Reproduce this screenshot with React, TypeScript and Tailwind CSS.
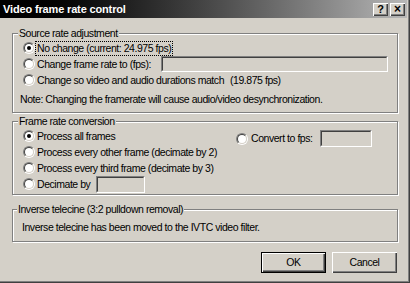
import React from 'react';

const Radio: React.FC<{ checked?: boolean }> = ({ checked }) => (
  <span className="w-[12px] h-[12px] shrink-0 rounded-full border border-t-[#808080] border-l-[#808080] border-b-white border-r-white">
    <span className="w-full h-full rounded-full border border-t-[#404040] border-l-[#404040] border-b-[#d4d0c8] border-r-[#d4d0c8] bg-white flex items-center justify-center">
      {checked && <span className="w-[4px] h-[4px] rounded-full bg-black"></span>}
    </span>
  </span>
);

const TextBox: React.FC<{ className?: string }> = ({ className }) => (
  <span className={`block border border-t-[#808080] border-l-[#808080] border-b-white border-r-white ${className ?? ''}`}>
    <span className="block w-full h-full border border-t-[#404040] border-l-[#404040] border-b-[#d4d0c8] border-r-[#d4d0c8] bg-[#d4d0c8]"></span>
  </span>
);

const Option: React.FC<{ checked?: boolean; focused?: boolean; children: React.ReactNode }> = ({ checked, focused, children }) => (
  <div className="h-[16px] flex items-center">
    <Radio checked={checked} />
    <span className={`ml-[1px] px-[1px] leading-[13px] whitespace-nowrap ${focused ? 'outline outline-1 outline-dotted outline-black' : ''}`}>
      {children}
    </span>
  </div>
);

const GroupBox: React.FC<{ title: string; className?: string; children: React.ReactNode }> = ({ title, className, children }) => (
  <fieldset className={`border border-[#808080] shadow-[inset_1px_1px_0_#fff,1px_1px_0_#fff] ${className ?? ''}`}>
    <legend className="-ml-[5px] px-[1px] leading-[13px] bg-[#d4d0c8]">{title}</legend>
    {children}
  </fieldset>
);

const Button: React.FC<{ isDefault?: boolean; children: React.ReactNode }> = ({ isDefault, children }) => (
  <button className={`w-[65px] h-[21px] bg-[#d4d0c8] ${isDefault ? 'border border-black' : ''}`}>
    <span className="flex w-full h-full items-center justify-center shadow-[inset_1px_1px_0_#fff,inset_-1px_-1px_0_#404040,inset_-2px_-2px_0_#808080]">
      {children}
    </span>
  </button>
);

const App: React.FC = () => {
  return (
    <div className="w-[410px] h-[283px] bg-[#d4d0c8] text-black text-[10.5px] tracking-[-0.45px] font-['Liberation_Sans',Arial,sans-serif] shadow-[inset_-1px_-1px_0_#404040,inset_-2px_-2px_0_#808080] overflow-hidden">
      {/* Title bar */}
      <div className="h-[18px] mr-[3px] flex items-center pl-[3px] pr-[2px] bg-gradient-to-r from-black to-[#b8b8b8] tracking-normal">
        <span className="text-white font-bold text-[11px] tracking-[-0.15px]">Video frame rate control</span>
        <div className="ml-auto flex gap-[2px]">
          <span className="w-[15px] h-[13px] bg-[#d4d0c8] flex items-center justify-center font-bold text-[11px] leading-none shadow-[inset_1px_1px_0_#fff,inset_-1px_-1px_0_#404040,inset_-2px_-2px_0_#808080]">?</span>
          <span className="w-[15px] h-[13px] bg-[#d4d0c8] flex items-center justify-center font-bold text-[12px] leading-none shadow-[inset_1px_1px_0_#fff,inset_-1px_-1px_0_#404040,inset_-2px_-2px_0_#808080]">×</span>
        </div>
      </div>

      <div className="px-[12px] pt-[9px]">
        <GroupBox title="Source rate adjustment" className="pl-[10px] pr-[9px] pb-[6px]">
          <Option checked focused>No change (current: 24.975 fps)</Option>
          <div className="h-[16px] flex items-center">
            <Radio />
            <span className="ml-[2px] leading-[13px] whitespace-nowrap">Change frame rate to (fps):</span>
            <TextBox className="ml-auto w-[227px] h-[16px]" />
          </div>
          <Option>
            Change so video and audio durations match<span className="ml-[6px]">(19.875 fps)</span>
          </Option>
          <p className="mt-[5px] -ml-[3px] leading-[13px]">Note: Changing the framerate will cause audio/video desynchronization.</p>
        </GroupBox>

        <GroupBox title="Frame rate conversion" className="mt-[2px] pl-[10px] pb-[2px]">
          <div className="flex">
            <div className="w-[213px]">
              <Option checked>Process all frames</Option>
              <Option>Process every other frame (decimate by 2)</Option>
              <Option>Process every third frame (decimate by 3)</Option>
              <div className="h-[16px] flex items-center">
                <Radio />
                <span className="ml-[2px] leading-[13px]">Decimate by</span>
                <TextBox className="ml-[6px] w-[49px] h-[17px]" />
              </div>
            </div>
            <div className="flex items-center h-[17px] mt-[2px]">
              <Radio />
              <span className="ml-[3px] leading-[13px]">Convert to fps:</span>
              <TextBox className="ml-[7px] w-[52px] h-[17px]" />
            </div>
          </div>
        </GroupBox>

        <GroupBox title="Inverse telecine (3:2 pulldown removal)" className="mt-[8px] pl-[9px] pt-[5px] pb-[7px]">
          <p className="leading-[13px]">Inverse telecine has been moved to the IVTC video filter.</p>
        </GroupBox>

        <div className="mt-[10px] flex justify-end gap-[6px] mr-[1px]">
          <Button isDefault>OK</Button>
          <Button>Cancel</Button>
        </div>
      </div>
    </div>
  );
};

export default App;
